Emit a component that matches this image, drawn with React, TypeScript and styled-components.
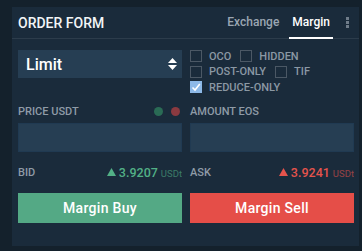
import React, { useState } from "react";
import styled, { createGlobalStyle } from "styled-components";

const GlobalStyle = createGlobalStyle`
  html, body {
    margin: 0;
    padding: 0;
    background: #14212c;
    font-family: Roboto, "Liberation Sans", Arial, sans-serif;
    -webkit-font-smoothing: antialiased;
  }
`;

const Panel = styled.div`
  margin: 7px 3px 5px 12px;
  width: 347px;
  height: 239px;
  background: #1a2b3b;
  display: flex;
  flex-direction: column;
`;

const Header = styled.div`
  height: 31px;
  border-bottom: 1px solid #2c3c4b;
  display: flex;
  align-items: stretch;
  justify-content: space-between;
  padding-left: 6px;
`;

const Title = styled.div`
  display: flex;
  align-items: center;
  color: #f2f5f7;
  font-size: 14px;
  font-weight: 500;
`;

const Tabs = styled.div`
  display: flex;
  align-items: stretch;
`;

const Tab = styled.div<{ $active?: boolean }>`
  display: flex;
  align-items: center;
  padding: 0 3px;
  margin-right: 7px;
  font-size: 12px;
  font-weight: 500;
  color: ${(p) => (p.$active ? "#ffffff" : "#9aa6b2")};
  border-bottom: 2px solid ${(p) => (p.$active ? "#ffffff" : "transparent")};
  margin-bottom: -1px;
`;

const Dots = styled.div`
  width: 14px;
  display: flex;
  align-items: center;
  justify-content: center;
  margin-right: 5px;
`;

const Body = styled.div`
  display: grid;
  grid-template-columns: 164px 164px;
  column-gap: 8px;
  align-items: start;
  padding: 11px 5px 0 6px;
`;

const Select = styled.div`
  height: 28px;
  background: #263e53;
  display: flex;
  align-items: center;
  justify-content: space-between;
  padding: 0 5px 0 8px;
  color: #ffffff;
  font-size: 16px;
  font-weight: 500;
`;

const Options = styled.div`
  display: flex;
  flex-direction: column;
  gap: 3.5px;
`;

const OptionRow = styled.div`
  display: flex;
  align-items: center;
  height: 12px;
`;

const Check = styled.label`
  display: flex;
  align-items: center;
  gap: 7px;
  margin-right: 9px;
  color: #8b98a4;
  font-size: 11px;
  font-weight: 500;
  cursor: pointer;
`;

const Box = styled.span<{ $on?: boolean }>`
  width: 12px;
  height: 12px;
  box-sizing: border-box;
  border: 1px solid ${(p) => (p.$on ? "#8db9e8" : "#4b5865")};
  background: ${(p) => (p.$on ? "#8db9e8" : "transparent")};
  display: flex;
  align-items: center;
  justify-content: center;
`;

const LabelRow = styled.div`
  margin-top: 12px;
  height: 12px;
  display: flex;
  align-items: center;
  justify-content: space-between;
  color: #8f9ba7;
  font-size: 11px;
  font-weight: 500;
`;

const Lights = styled.div`
  display: flex;
  gap: 8px;
  margin-right: 2px;
`;

const Light = styled.span<{ $color: string }>`
  width: 9px;
  height: 9px;
  border-radius: 50%;
  background: ${(p) => p.$color};
`;

const Input = styled.input`
  margin-top: 6px;
  height: 29px;
  width: 100%;
  box-sizing: border-box;
  border: 1px solid #203a52;
  background: #263e53;
  outline: none;
  color: #fff;
  padding: 0 8px;
  font-family: inherit;
`;

const QuoteRow = styled.div`
  margin-top: 14px;
  height: 12px;
  display: flex;
  align-items: center;
  justify-content: space-between;
  color: #8f9ba7;
  font-size: 11px;
  font-weight: 500;
`;

const Quote = styled.span<{ $color: string }>`
  display: flex;
  align-items: baseline;
  gap: 3px;
  color: ${(p) => p.$color};
  font-size: 12.5px;
  font-weight: 500;
`;

const Unit = styled.span`
  font-size: 9.5px;
  opacity: 0.6;
  font-weight: 400;
`;

const Button = styled.button<{ $color: string }>`
  margin-top: 15px;
  height: 30px;
  width: 100%;
  border: none;
  background: ${(p) => p.$color};
  color: #ffffff;
  font-family: inherit;
  font-size: 14px;
  font-weight: 500;
  letter-spacing: 0.3px;
  cursor: pointer;
`;

const SortIcon = () => (
  <svg width="9" height="12" viewBox="0 0 9 12">
    <path d="M4.5 0 L9 5 H0 Z" fill="#fff" />
    <path d="M4.5 12 L9 7 H0 Z" fill="#fff" />
  </svg>
);

const Up = ({ color }: { color: string }) => (
  <svg width="9" height="8" viewBox="0 0 9 8" style={{ alignSelf: "center" }}>
    <path d="M4.5 0 L9 8 H0 Z" fill={color} />
  </svg>
);

const Tick = () => (
  <svg width="10" height="10" viewBox="0 0 10 10">
    <path d="M1.5 5.5 L4 8 L8.8 2" stroke="#fff" strokeWidth="1.6" fill="none" />
  </svg>
);

const Option: React.FC<{ label: string; on: boolean; toggle: () => void }> = ({ label, on, toggle }) => (
  <Check onClick={toggle}>
    <Box $on={on}>{on && <Tick />}</Box>
    {label}
  </Check>
);

export default function App() {
  const [flags, setFlags] = useState<Record<string, boolean>>({ "REDUCE-ONLY": true });
  const toggle = (k: string) => () => setFlags((f) => ({ ...f, [k]: !f[k] }));
  const opt = (k: string) => <Option label={k} on={!!flags[k]} toggle={toggle(k)} />;

  return (
    <>
      <GlobalStyle />
      <Panel>
        <Header>
          <Title>ORDER FORM</Title>
          <Tabs>
            <Tab>Exchange</Tab>
            <Tab $active>Margin</Tab>
            <Dots>
              <svg width="3" height="11" viewBox="0 0 3 11">
                <rect x="0" y="0" width="3" height="3" fill="#6f7c89" />
                <rect x="0" y="4" width="3" height="3" fill="#6f7c89" />
                <rect x="0" y="8" width="3" height="3" fill="#6f7c89" />
              </svg>
            </Dots>
          </Tabs>
        </Header>
        <Body>
          <Select>
            Limit
            <SortIcon />
          </Select>
          <Options>
            <OptionRow>
              {opt("OCO")}
              {opt("HIDDEN")}
            </OptionRow>
            <OptionRow>
              {opt("POST-ONLY")}
              {opt("TIF")}
            </OptionRow>
            <OptionRow>{opt("REDUCE-ONLY")}</OptionRow>
          </Options>

          <LabelRow>
            PRICE USDT
            <Lights>
              <Light $color="#2a6b55" />
              <Light $color="#8a3a40" />
            </Lights>
          </LabelRow>
          <LabelRow>AMOUNT EOS</LabelRow>

          <Input />
          <Input />

          <QuoteRow>
            BID
            <Quote $color="#52b086">
              <Up color="#52b086" />
              3.9207 <Unit>USDt</Unit>
            </Quote>
          </QuoteRow>
          <QuoteRow>
            ASK
            <Quote $color="#e5534c">
              <Up color="#e5534c" />
              3.9241 <Unit>USDt</Unit>
            </Quote>
          </QuoteRow>

          <Button $color="#54a985">Margin Buy</Button>
          <Button $color="#e54e48">Margin Sell</Button>
        </Body>
      </Panel>
    </>
  );
}
